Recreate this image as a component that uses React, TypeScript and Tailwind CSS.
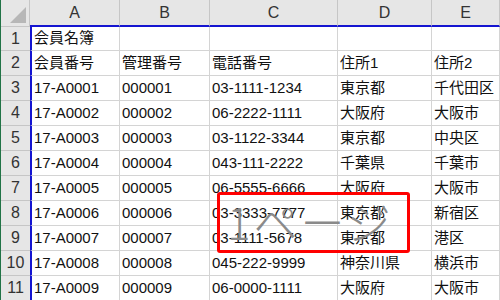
const columns = ["A", "B", "C", "D", "E"];

const rows: string[][] = [
    ["会員名簿", "", "", "", ""],
    ["会員番号", "管理番号", "電話番号", "住所1", "住所2"],
    ["17-A0001", "000001", "03-1111-1234", "東京都", "千代田区"],
    ["17-A0002", "000002", "06-2222-1111", "大阪府", "大阪市"],
    ["17-A0003", "000003", "03-1122-3344", "東京都", "中央区"],
    ["17-A0004", "000004", "043-111-2222", "千葉県", "千葉市"],
    ["17-A0005", "000005", "06-5555-6666", "大阪府", "大阪市"],
    ["17-A0006", "000006", "03-3333-7777", "東京都", "新宿区"],
    ["17-A0007", "000007", "03-1111-5678", "東京都", "港区"],
    ["17-A0008", "000008", "045-222-9999", "神奈川県", "横浜市"],
    ["17-A0009", "000009", "06-0000-1111", "大阪府", "大阪市"],
];

const font = "font-['Liberation_Sans','Noto_Sans_CJK_JP',sans-serif]";

export default function App() {
    return (
        <div className={`relative w-[500px] h-[300px] overflow-hidden bg-white border-l border-[#217346] ${font} text-[15px] text-[#111]`}>
            <div className="grid grid-cols-[29px_90px_90px_128px_94px_1fr]">
                {/* header row */}
                <div className="relative h-[27px] bg-[#e6e6e6] border-r border-b border-[#c6c6c6]">
                    <div className="absolute right-[3px] bottom-[3px] w-0 h-0 border-l-[16px] border-l-transparent border-b-[16px] border-b-[#b7b7b7]" />
                </div>
                {columns.map((c) => (
                    <div
                        key={c}
                        className="h-[27px] bg-[#e6e6e6] border-r border-[#c6c6c6] border-b-2 border-b-[#1414d0] flex items-center justify-center text-[16px] text-[#333] pt-px"
                    >
                        {c}
                    </div>
                ))}

                {/* data rows */}
                {rows.map((row, i) => (
                    <div key={i} className="contents">
                        <div
                            className={`${i === 0 ? "h-[24px]" : "h-[25px]"} bg-[#e6e6e6] border-b border-[#c6c6c6] flex items-center justify-center text-[16px] text-[#333]`}
                        >
                            {i + 1}
                        </div>
                        {row.map((cell, j) => (
                            <div
                                key={j}
                                className={`${i === 0 ? "h-[24px]" : "h-[25px]"} border-r border-b border-[#d4d4d4] flex items-center pl-[2px] whitespace-nowrap overflow-hidden ${j === 0 ? "border-l-2 border-l-[#1414d0]" : ""}`}
                            >
                                {cell}
                            </div>
                        ))}
                    </div>
                ))}
            </div>

            {/* page watermark */}
            <div className="absolute left-[226px] top-[199px] text-[44px] leading-none text-[#8a8a8a] font-['Noto_Sans_CJK_JP',sans-serif] font-light tracking-[3px] pointer-events-none select-none">
                1ページ
            </div>

            {/* highlight box */}
            <div className="absolute left-[216px] top-[192px] w-[193px] h-[61px] border-[3px] border-[#f00] rounded-[3px] pointer-events-none" />
        </div>
    );
}
